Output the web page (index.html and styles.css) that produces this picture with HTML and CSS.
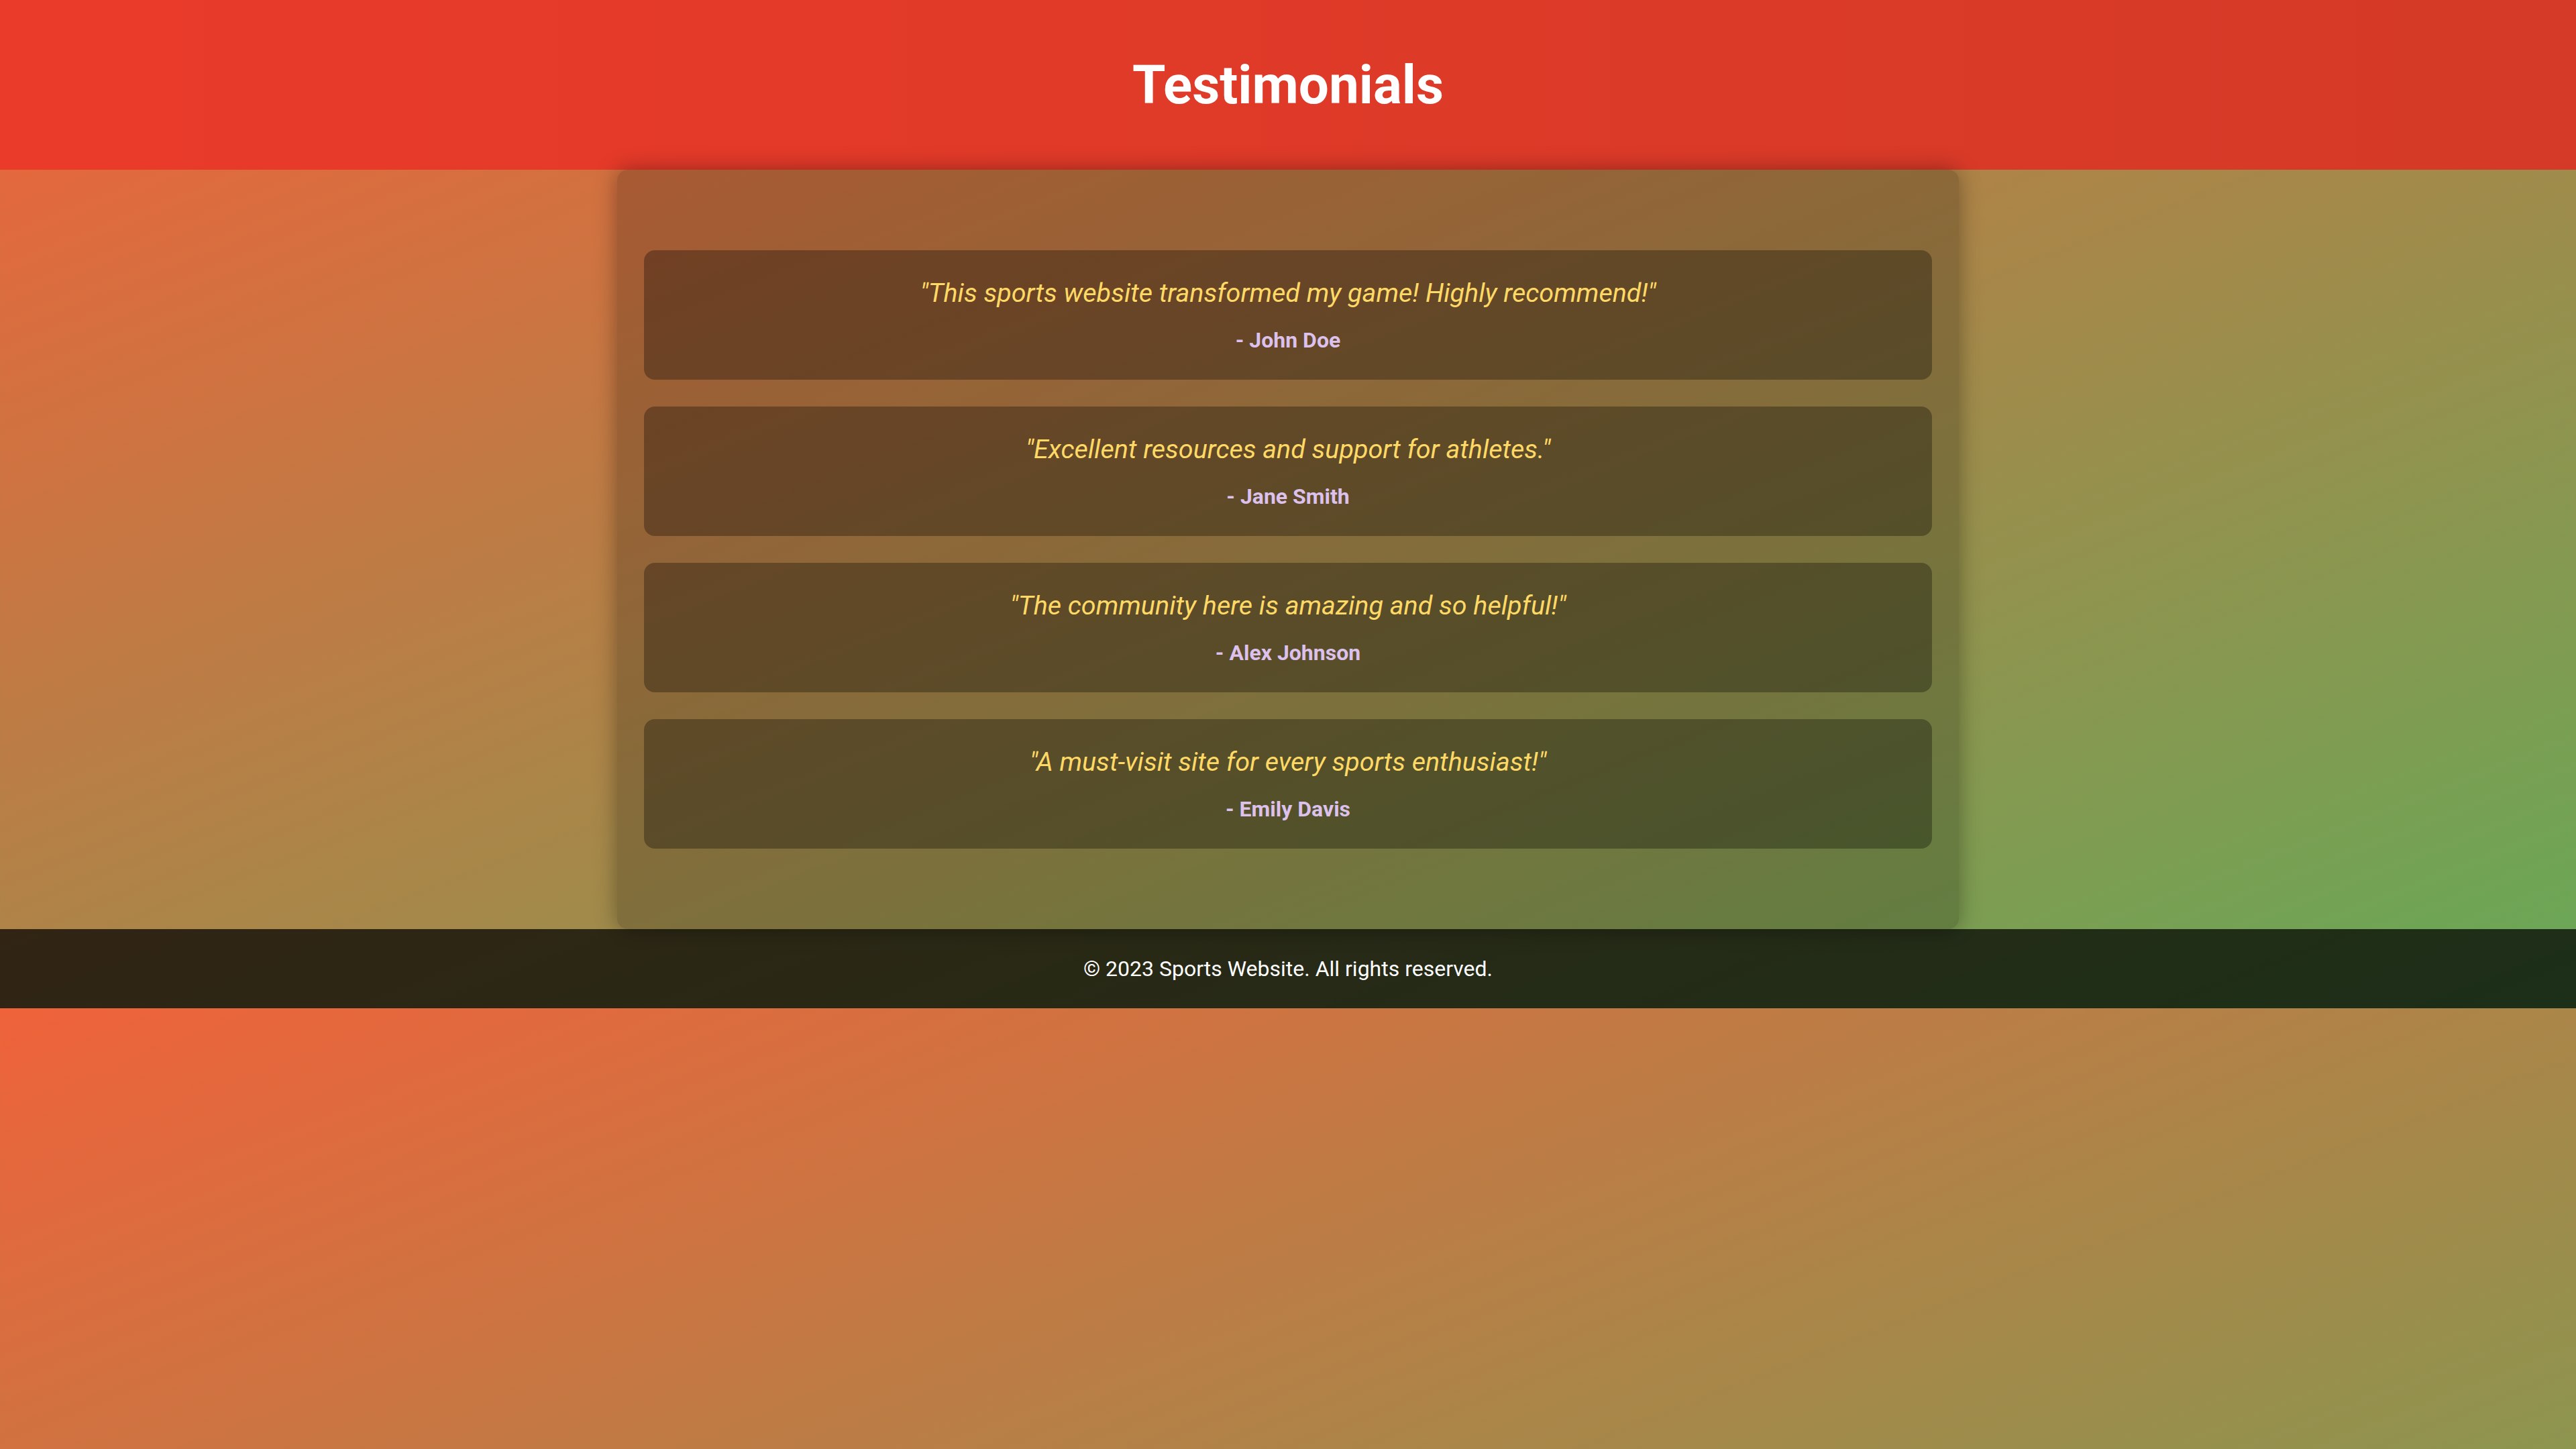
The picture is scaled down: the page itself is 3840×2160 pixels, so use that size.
FILE: index.html
```html
<!DOCTYPE html>
<html lang="en">
<head>
<meta charset="UTF-8">
<title>Testimonials</title>
<link rel="stylesheet" href="styles.css">
</head>
<body>
<header class="site-header">
  <h1 class="site-title">Testimonials</h1>
</header>
<main class="testimonials">
  <div class="testimonial">
    <p class="quote">"This sports website transformed my game! Highly recommend!"</p>
    <p class="author">- John Doe</p>
  </div>
  <div class="testimonial">
    <p class="quote">"Excellent resources and support for athletes."</p>
    <p class="author">- Jane Smith</p>
  </div>
  <div class="testimonial">
    <p class="quote">"The community here is amazing and so helpful!"</p>
    <p class="author">- Alex Johnson</p>
  </div>
  <div class="testimonial">
    <p class="quote">"A must-visit site for every sports enthusiast!"</p>
    <p class="author">- Emily Davis</p>
  </div>
</main>
<footer class="site-footer">
  <p class="copyright">&copy; 2023 Sports Website. All rights reserved.</p>
</footer>
</body>
</html>
```
FILE: styles.css
```css
body {
  margin: 0;
  font-family: Roboto, "Liberation Sans", sans-serif;
  font-size: 32px;
  color: #ffffff;
  background: linear-gradient(to bottom right, #ef623a, #66a957);
}

.site-header {
  padding: 80px 0 79px;
  text-align: center;
  background: linear-gradient(to right, #ea3a2a, #d43a27);
}

.site-title {
  margin: 0;
  font-size: 80px;
  font-weight: 700;
  color: #ffffff;
}

.testimonials {
  max-width: 2000px;
  margin: 0 auto;
  padding: 80px 40px;
  box-sizing: border-box;
  background: rgba(0, 0, 0, 0.2);
  border-radius: 16px;
  box-shadow: 0 0 32px rgba(0, 0, 0, 0.35);
}

.testimonial {
  margin: 40px 0;
  padding: 40px;
  text-align: center;
  background: rgba(0, 0, 0, 0.3);
  border-radius: 16px;
}

.quote {
  margin: 0 0 28px;
  font-size: 39.5px;
  font-style: italic;
  color: #ffd966;
}

.author {
  margin: 0;
  font-size: 32px;
  font-weight: 700;
  color: #dcc1ec;
}

.site-footer {
  padding: 40px 0;
  text-align: center;
  background: rgba(0, 0, 0, 0.72);
}

.copyright {
  margin: 0;
  font-size: 32px;
  color: #ffffff;
}
```
